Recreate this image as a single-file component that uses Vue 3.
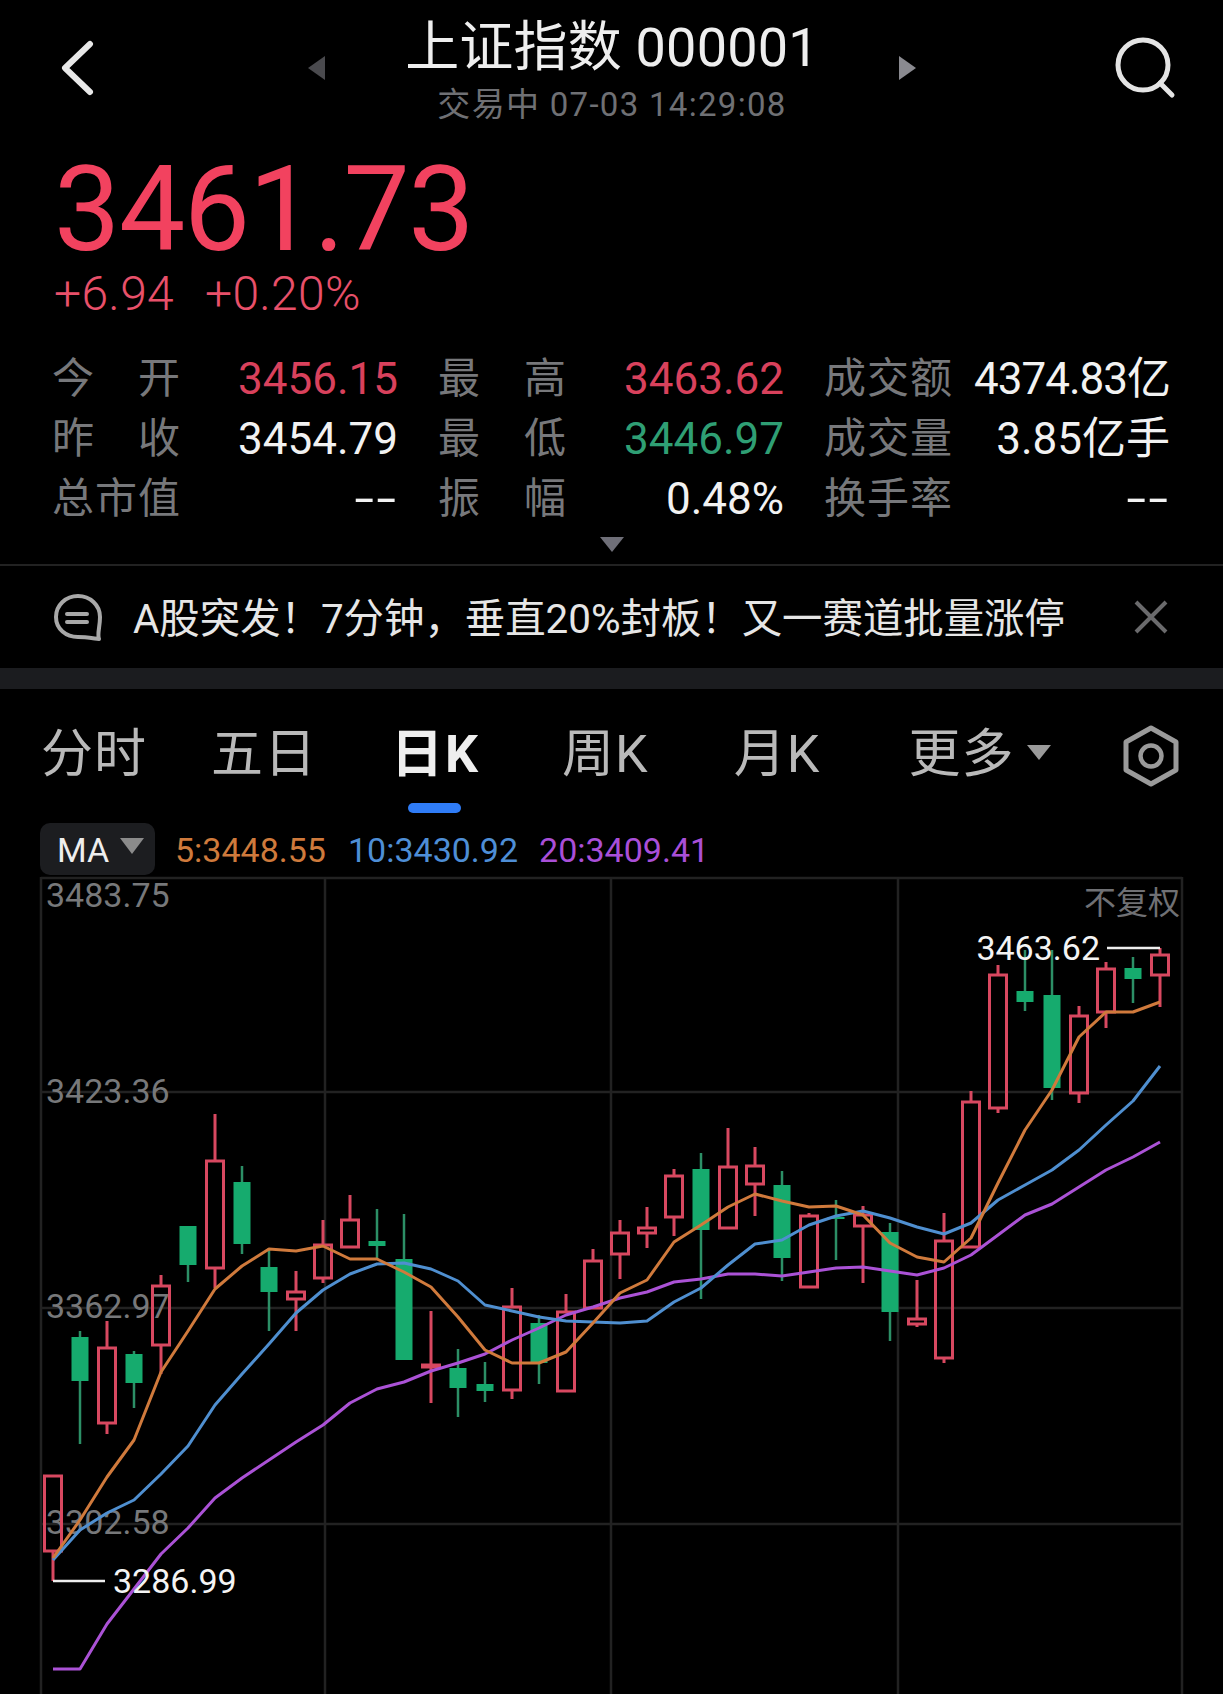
<script setup>
import { computed } from 'vue';

const stats = [
  [
    { label: '今开', value: '3456.15', cls: 'red' },
    { label: '最高', value: '3463.62', cls: 'red' },
    { label: '成交额', value: '4374.83亿', cls: 'tight' },
  ],
  [
    { label: '昨收', value: '3454.79', cls: '' },
    { label: '最低', value: '3446.97', cls: 'green' },
    { label: '成交量', value: '3.85亿手', cls: '' },
  ],
  [
    { label: '总市值', value: '--', cls: 'dash' },
    { label: '振幅', value: '0.48%', cls: '' },
    { label: '换手率', value: '--', cls: 'dash' },
  ],
];

const tabs = [
  { name: '分时' },
  { name: '五日' },
  { name: '日K', active: true },
  { name: '周K' },
  { name: '月K' },
];

// [body top, body bottom, high, low, up]
const rawCandles = [
  [1476, 1551, 1476, 1581, 1], [1337, 1381, 1331, 1444, 0], [1348, 1423, 1321, 1434, 1],
  [1354, 1383, 1351, 1408, 0], [1286, 1345, 1275, 1374, 1], [1226, 1265, 1226, 1282, 0],
  [1161, 1268, 1114, 1288, 1], [1182, 1244, 1166, 1254, 0], [1267, 1292, 1248, 1331, 0],
  [1292, 1299, 1271, 1331, 1], [1245, 1278, 1220, 1283, 1], [1220, 1247, 1195, 1247, 1],
  [1241, 1246, 1209, 1260, 0], [1259, 1360, 1214, 1360, 0], [1365, 1367, 1311, 1403, 1],
  [1368, 1388, 1349, 1417, 0], [1384, 1391, 1362, 1402, 0], [1307, 1390, 1288, 1399, 1],
  [1323, 1363, 1315, 1384, 0], [1312, 1391, 1294, 1391, 1], [1261, 1308, 1249, 1308, 1],
  [1233, 1254, 1220, 1279, 1], [1228, 1233, 1207, 1248, 1], [1176, 1217, 1169, 1236, 1],
  [1169, 1230, 1153, 1299, 0], [1167, 1228, 1128, 1228, 1], [1166, 1184, 1147, 1216, 1],
  [1185, 1258, 1171, 1281, 0], [1216, 1287, 1213, 1287, 1], [1217, 1219, 1200, 1260, 0],
  [1215, 1226, 1206, 1283, 1], [1232, 1312, 1223, 1341, 0], [1319, 1324, 1280, 1327, 1],
  [1241, 1358, 1213, 1363, 1], [1102, 1247, 1091, 1247, 1], [975, 1108, 965, 1113, 1],
  [991, 1002, 950, 1011, 0], [995, 1088, 950, 1100, 0], [1016, 1093, 1006, 1103, 1],
  [969, 1012, 962, 1028, 1], [968, 979, 957, 1003, 0], [955, 975, 948, 1007, 1],
];

const ma5 = [1558, 1520, 1477, 1440, 1372, 1331, 1289, 1266, 1249, 1251, 1246, 1259, 1259, 1272, 1287, 1317, 1350, 1363, 1363, 1352, 1323, 1293, 1280, 1242, 1225, 1207, 1194, 1201, 1207, 1206, 1215, 1243, 1257, 1262, 1238, 1183, 1130, 1090, 1037, 1012, 1012, 1002];
const ma10 = [1560, 1530, 1513, 1500, 1474, 1446, 1405, 1374, 1344, 1313, 1290, 1274, 1264, 1263, 1269, 1281, 1305, 1311, 1317, 1321, 1322, 1323, 1321, 1302, 1288, 1265, 1244, 1240, 1225, 1216, 1211, 1218, 1227, 1234, 1223, 1200, 1185, 1170, 1150, 1125, 1101, 1066];
const ma20 = [1669, 1669, 1624, 1589, 1554, 1528, 1498, 1478, 1460, 1442, 1425, 1403, 1389, 1382, 1371, 1363, 1354, 1340, 1328, 1315, 1307, 1298, 1292, 1282, 1279, 1274, 1274, 1276, 1272, 1268, 1267, 1271, 1275, 1268, 1255, 1235, 1215, 1204, 1187, 1170, 1157, 1142];

const xAt = (i) => 53 + 27 * i;
const toPoints = (list) => list.map((y, i) => `${xAt(i)},${y}`).join(' ');

const candles = computed(() =>
  rawCandles.map(([top, bottom, high, low, up], i) => ({ x: xAt(i), top, bottom, high, low, up: !!up }))
);

const hLines = [878, 1092, 1308, 1524];
const vLines = [41, 325, 611, 898, 1182];
const priceLabels = [
  { text: '3483.75', y: 907 },
  { text: '3423.36', y: 1103 },
  { text: '3362.97', y: 1318 },
  { text: '3302.58', y: 1534 },
];
</script>

<template>
  <div class="page">
    <header class="top-bar">
      <svg class="back" width="34" height="56" viewBox="0 0 34 56">
        <path d="M30 4 L5 28 L30 52" fill="none" stroke="#e8e8e8" stroke-width="6" stroke-linecap="round" stroke-linejoin="round" />
      </svg>
      <svg class="prev" width="17" height="24" viewBox="0 0 17 24"><path d="M17 0 V24 L0 12 Z" fill="#4a4a4e" /></svg>
      <div class="title-block">
        <div class="title">上证指数 000001</div>
        <div class="subtitle">交易中 07-03 14:29:08</div>
      </div>
      <svg class="next" width="17" height="24" viewBox="0 0 17 24"><path d="M0 0 V24 L17 12 Z" fill="#8a8a90" /></svg>
      <svg class="search" width="62" height="62" viewBox="0 0 62 62">
        <circle cx="29" cy="28" r="25" fill="none" stroke="#e4e4e4" stroke-width="5" />
        <path d="M46 46 L58 58" stroke="#e4e4e4" stroke-width="5" stroke-linecap="round" />
      </svg>
    </header>

    <section class="quote">
      <div class="price">3461.73</div>
      <div class="change"><span>+6.94</span><span>+0.20%</span></div>
    </section>

    <section class="stats">
      <template v-for="(row, r) in stats" :key="r">
        <div v-for="item in row" :key="item.label" class="stat">
          <span class="stat-label">{{ item.label }}</span>
          <span class="stat-value" :class="item.cls">{{ item.value }}</span>
        </div>
      </template>
    </section>
    <div class="expand"></div>

    <section class="news">
      <svg class="news-icon" width="48" height="47" viewBox="0 0 48 47">
        <path d="M24 2 C12 2 2 11 2 23 C2 35 12 43 24 43 C31 43 37 44 45 45 C43 40 46 33 46 23 C46 11 36 2 24 2 Z" fill="none" stroke="#a8a8a8" stroke-width="4" stroke-linejoin="round" />
        <path d="M13 20 H33 M13 28 H33" stroke="#a8a8a8" stroke-width="4" stroke-linecap="round" />
      </svg>
      <span class="news-text">A股突发！7分钟，垂直20%封板！又一赛道批量涨停</span>
      <svg class="close" width="34" height="34" viewBox="0 0 34 34">
        <path d="M2 2 L32 32 M32 2 L2 32" stroke="#6a6a6c" stroke-width="4" />
      </svg>
    </section>

    <div class="band"></div>

    <nav class="tabs">
      <div v-for="tab in tabs" :key="tab.name" class="tab" :class="{ active: tab.active }">{{ tab.name }}</div>
      <div class="tab more">更多<i class="more-arrow"></i></div>
      <svg class="settings" width="62" height="64" viewBox="0 0 62 64">
        <path d="M31 4 L56 18 V46 L31 60 L6 46 V18 Z" fill="none" stroke="#9a9a9a" stroke-width="5" stroke-linejoin="round" />
        <circle cx="31" cy="32" r="10.5" fill="none" stroke="#9a9a9a" stroke-width="4.5" />
      </svg>
    </nav>

    <div class="ma-row">
      <div class="ma-chip">MA<i class="ma-arrow"></i></div>
      <span class="ma ma5">5:3448.55</span>
      <span class="ma ma10">10:3430.92</span>
      <span class="ma ma20">20:3409.41</span>
    </div>

    <svg class="chart" width="1223" height="824" viewBox="0 870 1223 824">
      <line v-for="y in hLines" :key="'h' + y" x1="41" x2="1182" :y1="y" :y2="y" stroke="#222" stroke-width="2.5" />
      <line v-for="x in vLines" :key="'v' + x" :x1="x" :x2="x" y1="877" y2="1694" stroke="#222" stroke-width="2.5" />
      <text v-for="p in priceLabels" :key="p.text" x="46" :y="p.y" class="axis">{{ p.text }}</text>
      <text x="1180" y="914" text-anchor="end" class="adjust">不复权</text>

      <g v-for="c in candles" :key="c.x">
        <template v-if="c.up">
          <line :x1="c.x" :x2="c.x" :y1="c.high" :y2="c.top" stroke="#d84860" stroke-width="3" />
          <line :x1="c.x" :x2="c.x" :y1="c.bottom" :y2="c.low" stroke="#d84860" stroke-width="3" />
          <rect :x="c.x - 8.5" :y="c.top" width="17" :height="c.bottom - c.top" fill="none" stroke="#d84860" stroke-width="3" />
        </template>
        <template v-else>
          <line :x1="c.x" :x2="c.x" :y1="c.high" :y2="c.low" stroke="#2c8f66" stroke-width="2.5" />
          <rect :x="c.x - 8.5" :y="c.top" width="17" :height="c.bottom - c.top" fill="#16ab6e" />
        </template>
      </g>

      <polyline :points="toPoints(ma20)" fill="none" stroke="#ab52d6" stroke-width="3" stroke-linejoin="round" />
      <polyline :points="toPoints(ma10)" fill="none" stroke="#4f8fd0" stroke-width="3" stroke-linejoin="round" />
      <polyline :points="toPoints(ma5)" fill="none" stroke="#d07a3c" stroke-width="3" stroke-linejoin="round" />

      <line x1="1107" x2="1160" y1="948" y2="948" stroke="#eee" stroke-width="2.5" />
      <text x="1100" y="960" text-anchor="end" class="extreme">3463.62</text>
      <line x1="53" x2="105" y1="1581" y2="1581" stroke="#eee" stroke-width="2.5" />
      <text x="113" y="1593" class="extreme">3286.99</text>
    </svg>
  </div>
</template>

<style>
html,
body {
  margin: 0;
  background: #000;
}
</style>

<style scoped>
.page {
  width: 1223px;
  height: 1694px;
  overflow: hidden;
  background: #000;
  color: #eee;
  font-family: Roboto, "Noto Sans CJK SC", sans-serif;
}

.top-bar {
  display: flex;
  align-items: center;
  height: 136px;
}

.back {
  margin-left: 60px;
  flex: none;
}

.prev {
  margin-left: 214px;
  flex: none;
}

.title-block {
  width: 574px;
  height: 136px;
  padding-top: 18px;
  box-sizing: border-box;
  text-align: center;
  flex: none;
}

.title {
  font-size: 54px;
  line-height: 60px;
  letter-spacing: 0.2px;
  color: #eee;
}

.subtitle {
  margin-top: 8px;
  font-size: 33px;
  line-height: 38px;
  letter-spacing: 1.3px;
  color: #6f7074;
}

.next {
  flex: none;
}

.search {
  margin-left: 198px;
  flex: none;
}

.quote {
  padding-left: 54px;
}

.price {
  margin-top: 18px;
  font-size: 118px;
  line-height: 112px;
  letter-spacing: -1.4px;
  color: #f2425f;
}

.change {
  display: flex;
  gap: 31px;
  margin-top: 3px;
  font-size: 48px;
  line-height: 50px;
  font-weight: 300;
  letter-spacing: 0.3px;
  color: #e8506a;
}

.stats {
  display: grid;
  grid-template-columns: repeat(3, 346px);
  column-gap: 40px;
  margin-top: 30px;
  padding-left: 52px;
}

.stat {
  display: flex;
  justify-content: space-between;
  height: 60px;
  line-height: 60px;
}

.stat-label {
  width: 128px;
  font-size: 42px;
  color: #77787b;
  text-align: justify;
  text-align-last: justify;
}

.stat-value {
  font-size: 44px;
  color: #f2f2f2;
  white-space: nowrap;
}

.stat-value.red {
  color: #d9415c;
}

.stat-value.green {
  color: #2f9f74;
}

.stat-value.tight {
  letter-spacing: -1px;
}

.stat-value.dash {
  letter-spacing: 1.5px;
  transform: scaleX(1.6);
  transform-origin: right center;
}

.expand {
  width: 0;
  height: 0;
  margin: 8px 0 12px 600px;
  border-left: 12px solid transparent;
  border-right: 12px solid transparent;
  border-top: 15px solid #6f6f78;
}

.news {
  display: flex;
  align-items: center;
  height: 102px;
  border-top: 2px solid #222;
  padding-left: 54px;
}

.news-icon {
  flex: none;
}

.news-text {
  margin: -4px 0 0 31px;
  font-size: 40.4px;
  color: #e6e6e6;
  white-space: nowrap;
}

.close {
  margin-left: 69px;
  flex: none;
}

.band {
  height: 21px;
  background: #1b1c1f;
}

.tabs {
  display: flex;
  align-items: center;
  height: 134px;
  padding: 0 0 2px 41px;
  box-sizing: border-box;
}

.tab {
  position: relative;
  font-size: 52px;
  line-height: 60px;
  letter-spacing: 1px;
  color: #b9b9b9;
  white-space: nowrap;
}

.tab:nth-child(2) {
  margin-left: 64px;
}

.tab:nth-child(3) {
  margin-left: 74px;
}

.tab:nth-child(4) {
  margin-left: 82px;
}

.tab:nth-child(5) {
  margin-left: 85px;
}

.tab.active {
  font-weight: 700;
  letter-spacing: 2px;
  color: #eee;
}

.tab.active::after {
  content: '';
  position: absolute;
  left: 17px;
  top: 78px;
  width: 53px;
  height: 10px;
  border-radius: 5px;
  background: #2f7cf6;
}

.tab.more {
  display: flex;
  align-items: center;
  margin-left: 88px;
}

.more-arrow {
  width: 0;
  height: 0;
  margin: 0 0 6px 13px;
  border-left: 12px solid transparent;
  border-right: 12px solid transparent;
  border-top: 15px solid #9a9a9a;
}

.settings {
  flex: none;
  margin: 1px 0 0 69px;
}

.ma-row {
  display: flex;
  align-items: center;
  height: 52px;
  padding-left: 40px;
  margin-bottom: -5px;
}

.ma-chip {
  display: flex;
  align-items: center;
  box-sizing: border-box;
  width: 115px;
  height: 52px;
  padding: 2px 0 0 17px;
  border-radius: 10px;
  background: #1c1d20;
  font-size: 34px;
  color: #eee;
}

.ma-arrow {
  width: 0;
  height: 0;
  margin-left: 11px;
  margin-bottom: 8px;
  border-left: 12px solid transparent;
  border-right: 12px solid transparent;
  border-top: 16px solid #8b8b8b;
}

.ma {
  padding-top: 2px;
  font-size: 34px;
  white-space: nowrap;
}

.ma5 {
  margin-left: 20px;
  color: #cf7a3c;
}

.ma10 {
  margin-left: 22px;
  color: #4e8ed6;
}

.ma20 {
  margin-left: 21px;
  color: #a94fd8;
}

.chart {
  display: block;
  position: relative;
}

.axis {
  font-size: 34px;
  fill: #77787a;
}

.adjust {
  font-size: 32px;
  fill: #6f7074;
}

.extreme {
  font-size: 34px;
  fill: #f4f4f4;
}
</style>
